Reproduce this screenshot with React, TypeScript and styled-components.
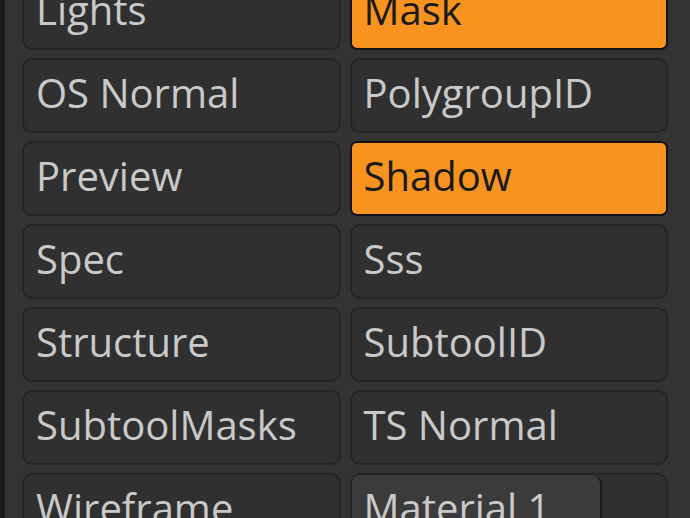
import styled, { createGlobalStyle } from 'styled-components'

const GlobalStyle = createGlobalStyle`
  html, body {
    margin: 0;
    padding: 0;
    background: #333333;
    overflow: hidden;
  }
`

type Pass = { label: string; on?: boolean }

const passes: Pass[] = [
  { label: 'Lights' },
  { label: 'Mask', on: true },
  { label: 'OS Normal' },
  { label: 'PolygroupID' },
  { label: 'Preview' },
  { label: 'Shadow', on: true },
  { label: 'Spec' },
  { label: 'Sss' },
  { label: 'Structure' },
  { label: 'SubtoolID' },
  { label: 'SubtoolMasks' },
  { label: 'TS Normal' },
  { label: 'Wireframe' },
]

export default function App() {
  return (
    <>
      <GlobalStyle />
      <Panel>
        <Grid>
          {passes.map((p) => (
            <PassButton key={p.label} $on={p.on}>
              {p.label}
            </PassButton>
          ))}
          <MaterialSlot>
            <MaterialSwatch>Material 1</MaterialSwatch>
          </MaterialSlot>
        </Grid>
      </Panel>
    </>
  )
}

const Panel = styled.div`
  width: 690px;
  height: 518px;
  box-sizing: border-box;
  border-left: 5px solid #1c1c1c;
  background: #333333;
  padding: 0 22px 0 17px;
  overflow: hidden;
`

const Grid = styled.div`
  display: grid;
  grid-template-columns: 1fr 1fr;
  column-gap: 9px;
  row-gap: 8px;
  grid-auto-rows: 75px;
  margin-top: -25px;
`

const PassButton = styled.div<{ $on?: boolean }>`
  display: flex;
  align-items: center;
  box-sizing: border-box;
  padding: 0 12px 5px 12px;
  border: 2px solid ${(p) => (p.$on ? '#141414' : '#252525')};
  border-radius: ${(p) => (p.$on ? '7px' : '10px')};
  background: ${(p) => (p.$on ? '#f8931f' : '#303030')};
  color: ${(p) => (p.$on ? '#1a1a1a' : '#c9c9c9')};
  font-family: 'Open Sans', 'Noto Sans', sans-serif;
  font-size: 40px;
  line-height: 1;
  white-space: nowrap;
`

const MaterialSlot = styled.div`
  display: flex;
  box-sizing: border-box;
  border: 2px solid #252525;
  border-radius: 10px;
  background: #303030;
  overflow: hidden;
`

const MaterialSwatch = styled.div`
  display: flex;
  align-items: center;
  box-sizing: border-box;
  width: 250px;
  padding: 0 12px 5px 12px;
  background: #3b3b3b;
  border-right: 2px solid #1c1c1c;
  border-top-right-radius: 9px;
  color: #c9c9c9;
  font-family: 'Open Sans', 'Noto Sans', sans-serif;
  font-size: 40px;
  line-height: 1;
  white-space: nowrap;
`
